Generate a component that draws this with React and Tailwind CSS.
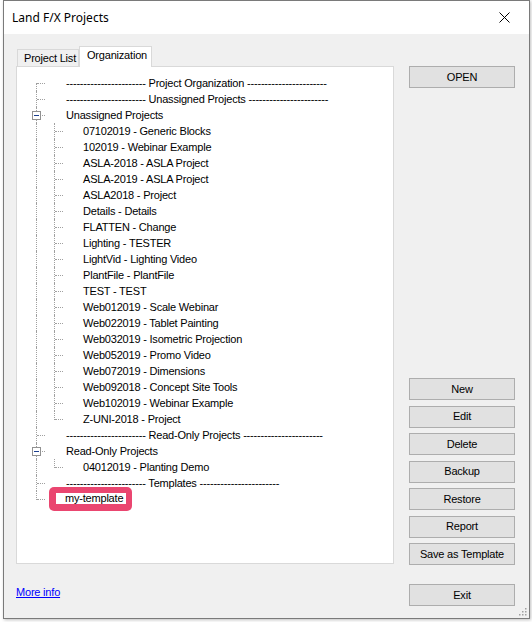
import React from "react"

const dash = "-".repeat(23)

const unassigned = [
  "07102019 - Generic Blocks",
  "102019 - Webinar Example",
  "ASLA-2018 - ASLA Project",
  "ASLA-2019 - ASLA Project",
  "ASLA2018 - Project",
  "Details - Details",
  "FLATTEN - Change",
  "Lighting - TESTER",
  "LightVid - Lighting Video",
  "PlantFile - PlantFile",
  "TEST - TEST",
  "Web012019 - Scale Webinar",
  "Web022019 - Tablet Painting",
  "Web032019 - Isometric Projection",
  "Web052019 - Promo Video",
  "Web072019 - Dimensions",
  "Web092018 - Concept Site Tools",
  "Web102019 - Webinar Example",
  "Z-UNI-2018 - Project",
]

const line = "absolute border-dotted border-[#a0a0a0]"

function Gutter({ root = "mid", child = null, box = false }) {
  return (
    <div className={`relative h-[16px] shrink-0 ${child ? "w-[66px]" : "w-[49px]"}`}>
      {root === "first" && <span className={`${line} left-[19px] top-[8px] bottom-0 border-l`} />}
      {root === "mid" && <span className={`${line} left-[19px] top-0 bottom-0 border-l`} />}
      {root === "last" && <span className={`${line} left-[19px] top-0 h-[9px] border-l`} />}
      {!child && <span className={`${line} left-[20px] top-[8px] w-[8px] border-t`} />}
      {box && (
        <span className="absolute left-[15px] top-[4px] w-[9px] h-[9px] border border-[#919191] bg-white flex items-center justify-center">
          <span className="w-[5px] h-px bg-[#1c3f8f]" />
        </span>
      )}
      {child === "mid" && <span className={`${line} left-[37px] top-0 bottom-0 border-l`} />}
      {child === "last" && <span className={`${line} left-[37px] top-0 h-[9px] border-l`} />}
      {child && <span className={`${line} left-[38px] top-[8px] w-[8px] border-t`} />}
    </div>
  )
}

function Row({ children, ...g }) {
  return (
    <div className="flex h-[16px] items-center">
      <Gutter {...g} />
      <span className="whitespace-nowrap leading-[16px] text-black">{children}</span>
    </div>
  )
}

function Sep({ label, root }) {
  return (
    <Row root={root}>
      {dash} {label} {dash}
    </Row>
  )
}

function Btn({ children, className = "" }) {
  return (
    <button className={`h-[22px] w-[106px] border border-[#adadad] bg-[#e1e1e1] text-[11px] tracking-[-0.2px] text-black leading-none ${className}`}>
      {children}
    </button>
  )
}

export default function App() {
  return (
    <div
      className="w-[532px] h-[622px] bg-white pl-[3px] overflow-hidden"
      style={{ fontFamily: '"Liberation Sans", Arial, sans-serif' }}
    >
      <div className="w-[527px] h-[619px] border border-[#7a7a7a] flex flex-col shadow-[1px_1px_3px_rgba(0,0,0,0.25)]">
        {/* Title bar */}
        <div className="h-[33px] bg-white flex items-center justify-between pl-[8px] pr-[19px] shrink-0">
          <span className="text-[12px] text-black" style={{ fontFamily: '"Noto Sans", "Liberation Sans", sans-serif' }}>
            Land F/X Projects
          </span>
          <svg width="11" height="11" viewBox="0 0 11 11">
            <path d="M0.5 0.5L10.5 10.5M10.5 0.5L0.5 10.5" stroke="#000" strokeWidth="1" />
          </svg>
        </div>

        {/* Body */}
        <div className="relative flex-1 bg-[#f0f0f0] flex text-[11px] tracking-[-0.2px]">
          {/* Left column */}
          <div className="ml-[12px] w-[378px] flex flex-col">
            <div className="mt-[12px] h-[20px] flex items-end pl-[1px]">
              <div className="h-[17px] w-[62px] border border-b-0 border-[#d9d9d9] bg-[#f0f0f0] pl-[6px] leading-[16px] text-black">
                Project List
              </div>
              <div className="relative z-10 -mb-px h-[21px] w-[73px] border border-b-0 border-[#d9d9d9] bg-white pl-[7px] leading-[17px] text-black">
                Organization
              </div>
            </div>
            <div className="h-[498px] border border-[#d9d9d9] bg-white pt-[8px]">
              <Sep root="first" label="Project Organization" />
              <Sep label="Unassigned Projects" />
              <Row box>Unassigned Projects</Row>
              {unassigned.map((p, i) => (
                <Row key={p} child={i === unassigned.length - 1 ? "last" : "mid"}>
                  {p}
                </Row>
              ))}
              <Sep label="Read-Only Projects" />
              <Row box>Read-Only Projects</Row>
              <Row child="last">04012019 - Planting Demo</Row>
              <Sep label="Templates" />
              <div className="relative flex h-[16px] items-center">
                <Gutter root="last" />
                <div className="absolute left-[32px] top-[-4px] w-[83px] h-[24px] rounded-[5px] bg-[#ea4670] pl-[7px] pr-[6px] pt-[6px] pb-[7px]">
                  <div className="h-full bg-white pl-[9px] leading-[11px] text-black whitespace-nowrap">my-template</div>
                </div>
              </div>
            </div>
            <div className="mt-[22px] leading-[12px]">
              <a className="text-[#0000ff] underline underline-offset-[1px]">More info</a>
            </div>
          </div>

          {/* Right column */}
          <div className="ml-[15px] w-[106px] flex flex-col">
            <Btn className="mt-[32px]">OPEN</Btn>
            <div className="mt-[290px] flex flex-col gap-[5.5px]">
              <Btn>New</Btn>
              <Btn>Edit</Btn>
              <Btn>Delete</Btn>
              <Btn>Backup</Btn>
              <Btn>Restore</Btn>
              <Btn>Report</Btn>
              <Btn>Save as Template</Btn>
            </div>
            <Btn className="mt-[19px]">Exit</Btn>
          </div>

          {/* resize grip */}
          <svg className="absolute right-[2px] bottom-[2px]" width="10" height="10" viewBox="0 0 10 10">
            {[
              [8, 2],
              [5, 5],
              [8, 5],
              [2, 8],
              [5, 8],
              [8, 8],
            ].map(([x, y]) => (
              <rect key={`${x}-${y}`} x={x} y={y} width="1.5" height="1.5" fill="#a0a0a0" />
            ))}
          </svg>
        </div>
      </div>
    </div>
  )
}
